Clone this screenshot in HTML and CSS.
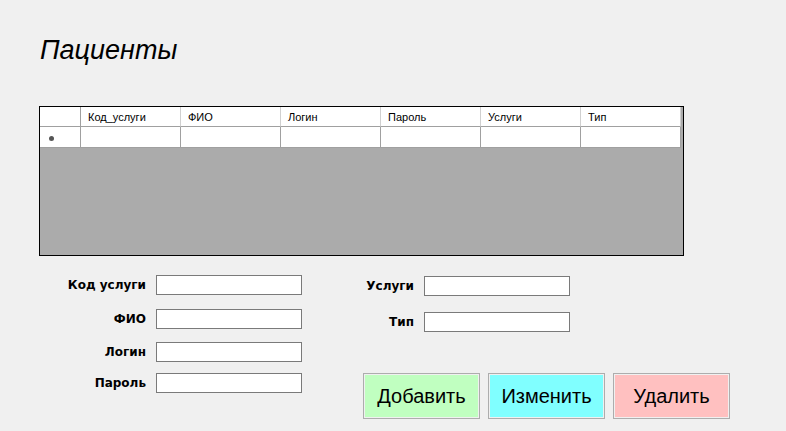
FILE: index.html
```html
<!DOCTYPE html>
<html lang="ru">
<head>
<meta charset="utf-8">
<title>Пациенты</title>
<link rel="stylesheet" href="styles.css">
</head>
<body>
<div class="window">
  <h1 class="title">Пациенты</h1>
  <div class="grid">
    <div class="grid-row head">
      <div class="cell rowhead"></div>
      <div class="cell">Код_услуги</div>
      <div class="cell">ФИО</div>
      <div class="cell">Логин</div>
      <div class="cell">Пароль</div>
      <div class="cell">Услуги</div>
      <div class="cell">Тип</div>
    </div>
    <div class="grid-row data">
      <div class="cell rowhead"><span class="star"></span></div>
      <div class="cell"></div>
      <div class="cell"></div>
      <div class="cell"></div>
      <div class="cell"></div>
      <div class="cell"></div>
      <div class="cell"></div>
    </div>
  </div>
  <div class="form">
    <div class="col left">
      <div class="field f1"><label>Код услуги</label><input type="text"></div>
      <div class="field f2"><label>ФИО</label><input type="text"></div>
      <div class="field f3"><label>Логин</label><input type="text"></div>
      <div class="field f4"><label>Пароль</label><input type="text"></div>
    </div>
    <div class="col right">
      <div class="field r1"><label>Услуги</label><input type="text"></div>
      <div class="field r2"><label>Тип</label><input type="text"></div>
      <div class="buttons">
        <button class="btn add">Добавить</button>
        <button class="btn edit">Изменить</button>
        <button class="btn del">Удалить</button>
      </div>
    </div>
  </div>
</div>
</body>
</html>
```

FILE: styles.css
```css
* { box-sizing: border-box; }
html, body {
  margin: 0;
  padding: 0;
  background: #f0f0f0;
  font-family: "Liberation Sans", Arial, sans-serif;
  color: #000;
}
.window {
  width: 786px;
  height: 431px;
  overflow: hidden;
  padding-left: 39px;
}
.title {
  margin: 34px 0 0 1px;
  font-size: 27px;
  line-height: 32px;
  font-weight: normal;
  font-style: italic;
  height: 32px;
}
.grid {
  margin-top: 40px;
  width: 645px;
  height: 150px;
  border: 1px solid #000;
  background: #ababab;
}
.grid-row {
  display: flex;
  background: #fff;
  width: 641px;
}
.cell {
  width: 100px;
  border-right: 1px solid #a0a0a0;
  border-bottom: 1px solid #a0a0a0;
  font-size: 11px;
  padding-left: 7px;
  display: flex;
  align-items: center;
}
.head .cell {
  height: 20px;
  padding-top: 1px;
  border-right-color: #d0d0d0;
}
.data .cell { height: 21px; }
.cell.rowhead {
  width: 41px;
  border-right-color: #a0a0a0;
}
.star {
  display: block;
  width: 5px;
  height: 5px;
  border-radius: 50%;
  background: #555;
  margin-left: 2px;
  margin-top: 3px;
}
.form {
  display: flex;
  margin-top: 19px;
}
.col { display: flex; flex-direction: column; }
.field {
  display: flex;
  align-items: center;
  height: 20px;
}
.field label {
  font-family: "DejaVu Sans", Verdana, sans-serif;
  font-weight: bold;
  font-size: 12px;
  text-align: right;
}
.left label { width: 107px; margin-right: 10px; }
.f2 { margin-top: 14px; }
.f3 { margin-top: 13px; }
.f4 { margin-top: 11px; }
.field input {
  width: 146px;
  height: 20px;
  border: 1px solid #7a7a7a;
  background: #fff;
  margin: 0;
  padding: 0;
}
.right { margin-left: 60px; margin-top: 1px; }
.right label { width: 52px; margin-right: 10px; }
.r2 { margin-top: 16px; }
.buttons {
  display: flex;
  gap: 8px;
  margin-top: 41px;
  margin-left: 1px;
}
.btn {
  width: 117px;
  height: 46px;
  border: 1px solid #adadad;
  padding: 0;
  margin: 0;
  font-family: "Liberation Sans", Arial, sans-serif;
  font-size: 20px;
  color: #000;
  box-shadow: inset 0 0 0 1px #f0f0f0;
}
.add { background: #c0ffc0; }
.edit { background: #80ffff; }
.del { background: #ffc0c0; }
```
